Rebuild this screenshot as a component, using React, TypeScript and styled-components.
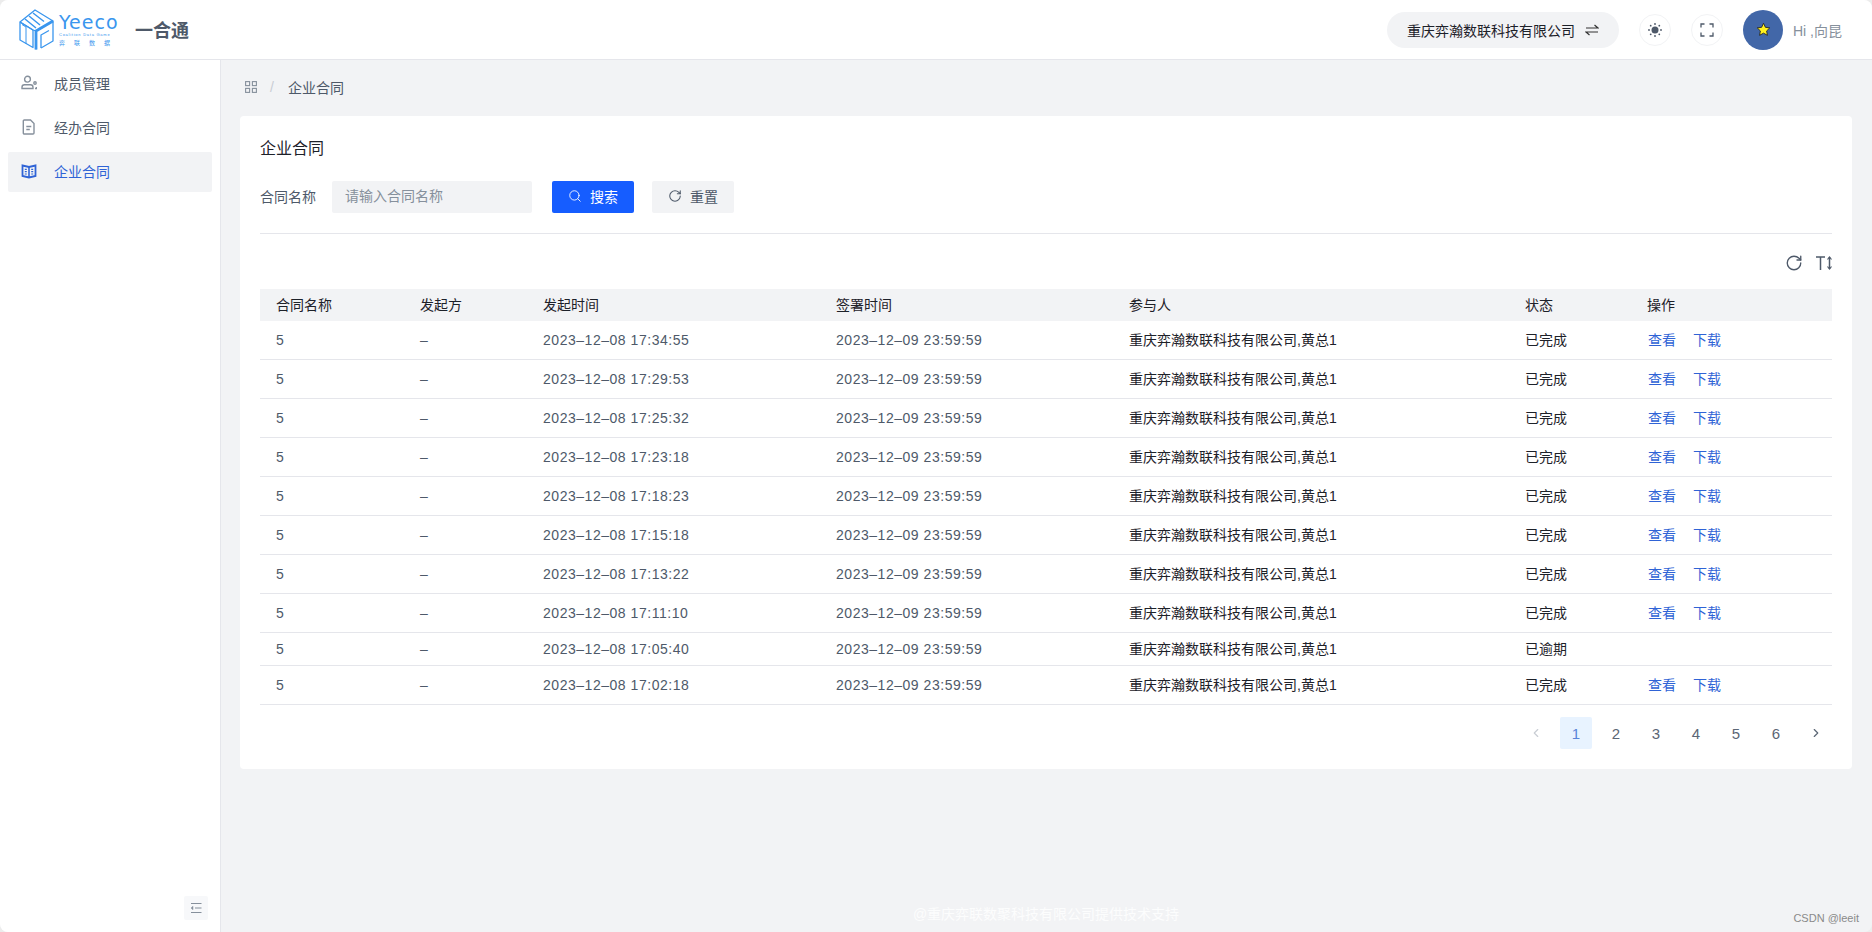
import React from "react";
import styled, { createGlobalStyle } from "styled-components";
import { ChevronLeft, ChevronRight, RotateCw, Search } from "lucide-react";

const GlobalStyle = createGlobalStyle`
  html, body {
    margin: 0;
    padding: 0;
    background: #ececec;
  }
  body {
    font-family: "Liberation Sans", "Noto Sans CJK SC", sans-serif;
    font-size: 14px;
    color: #1d2129;
  }
`;

const Page = styled.div`
  width: 1872px;
  height: 932px;
  display: flex;
  flex-direction: column;
  overflow: hidden;
  position: relative;
  background: #f2f3f5;
  border-radius: 8px;
`;

const Header = styled.header`
  height: 60px;
  flex: none;
  box-sizing: border-box;
  display: flex;
  align-items: center;
  background: #fff;
  border-bottom: 1px solid #e5e6eb;
  padding: 0 30px 0 19px;
`;

const LogoWrap = styled.div`
  display: flex;
  align-items: center;
  gap: 4px;
`;

const LogoText = styled.div`
  width: 60px;
  display: flex;
  flex-direction: column;
  align-items: flex-start;
  color: #3a96ee;
  line-height: 1;
`;

const LogoName = styled.span`
  font-family: "DejaVu Sans", sans-serif;
  font-size: 19px;
  letter-spacing: 1px;
`;

const LogoSub = styled.span`
  font-size: 4px;
  letter-spacing: 0.75px;
  white-space: nowrap;
  margin-top: 1px;
`;

const LogoCn = styled.span`
  font-size: 6px;
  letter-spacing: 9px;
  margin-top: 3px;
  white-space: nowrap;
`;

const AppName = styled.div`
  margin-left: 16px;
  padding-bottom: 2px;
  font-size: 18px;
  font-weight: 700;
  color: #4e5969;
`;

const HeaderRight = styled.div`
  margin-left: auto;
  display: flex;
  align-items: center;
`;

const OrgSwitch = styled.div`
  height: 36px;
  width: 232px;
  box-sizing: border-box;
  padding: 0 20px;
  border-radius: 18px;
  background: #f2f3f5;
  display: flex;
  align-items: center;
  justify-content: space-between;
  margin-right: 20px;
`;

const RoundBtn = styled.div`
  width: 32px;
  height: 32px;
  box-sizing: border-box;
  border: 1px solid #f2f3f5;
  border-radius: 50%;
  display: flex;
  align-items: center;
  justify-content: center;
  margin-right: 20px;
`;

const Avatar = styled.div`
  width: 40px;
  height: 40px;
  border-radius: 50%;
  background: #4267a8;
  display: flex;
  align-items: center;
  justify-content: center;
`;

const Hi = styled.span`
  margin-left: 10px;
  color: #86909c;
`;

const Body = styled.div`
  flex: 1;
  display: flex;
  min-height: 0;
`;

const Side = styled.aside`
  width: 221px;
  flex: none;
  box-sizing: border-box;
  background: #fff;
  border-right: 1px solid #e5e6eb;
  padding: 4px 8px 12px;
  display: flex;
  flex-direction: column;
  gap: 4px;
`;

const MenuItem = styled.div<{ $active?: boolean }>`
  height: 40px;
  box-sizing: border-box;
  flex: none;
  display: flex;
  align-items: center;
  gap: 17px;
  padding: 0 0 2px 13px;
  border-radius: 2px;
  background: ${(p) => (p.$active ? "#f2f3f5" : "transparent")};
  color: ${(p) => (p.$active ? "#2f63d6" : "#4e5969")};
`;

const Collapse = styled.div`
  margin-top: auto;
  margin-left: auto;
  margin-right: 4px;
  width: 24px;
  height: 24px;
  border-radius: 2px;
  background: #f7f8fa;
  display: flex;
  align-items: center;
  justify-content: center;
`;

const Main = styled.main`
  flex: 1;
  min-width: 0;
  display: flex;
  flex-direction: column;
  padding: 0 20px 0 19px;
`;

const Crumbs = styled.nav`
  height: 56px;
  box-sizing: border-box;
  flex: none;
  display: flex;
  align-items: center;
  padding: 0 0 2px 5px;
  color: #4e5969;
`;

const Slash = styled.span`
  color: #c9cdd4;
  margin: 0 14px 0 13px;
`;

const Card = styled.section`
  background: #fff;
  border-radius: 4px;
  padding: 20px;
`;

const CardTitle = styled.h2`
  margin: 0;
  font-size: 16px;
  font-weight: 400;
  line-height: 26px;
`;

const FilterBar = styled.div`
  margin-top: 19px;
  padding-bottom: 20px;
  border-bottom: 1px solid #e5e6eb;
  display: flex;
  align-items: center;
`;

const FieldLabel = styled.label`
  color: #4e5969;
  margin: 0 16px 2px 0;
`;

const TextInput = styled.input`
  width: 200px;
  height: 32px;
  box-sizing: border-box;
  border: 0;
  outline: 0;
  padding: 0 13px 2px;
  border-radius: 2px;
  background: #f2f3f5;
  font: inherit;
  &::placeholder {
    color: #86909c;
  }
`;

const Btn = styled.button<{ $primary?: boolean }>`
  height: 32px;
  width: 82px;
  border: 0;
  border-radius: 2px;
  padding: 0 0 2px;
  display: flex;
  align-items: center;
  justify-content: center;
  gap: 8px;
  font: inherit;
  margin-left: ${(p) => (p.$primary ? "20px" : "18px")};
  background: ${(p) => (p.$primary ? "#165dff" : "#f2f3f5")};
  color: ${(p) => (p.$primary ? "#fff" : "#4e5969")};
`;

const Tools = styled.div`
  height: 55px;
  display: flex;
  align-items: center;
  justify-content: flex-end;
  gap: 13px;
  padding-top: 2px;
  box-sizing: border-box;
`;

const Table = styled.table`
  width: 100%;
  table-layout: fixed;
  border-collapse: separate;
  border-spacing: 0;
`;

const Th = styled.th`
  background: #f2f3f5;
  font-weight: 400;
  text-align: left;
  line-height: 22px;
  padding: 5px 16px;
`;

const Td = styled.td<{ $muted?: boolean }>`
  line-height: 22px;
  padding: 5px 16px;
  border-bottom: 1px solid #e5e6eb;
  white-space: nowrap;
  color: ${(p) => (p.$muted ? "#4e5969" : "#1d2129")};
`;

const DateText = styled.span`
  letter-spacing: 0.53px;
`;

const Action = styled.a`
  display: inline-block;
  padding: 3px 0;
  margin: 0 16px 0 1px;
  color: #2f63d6;
`;

const Pager = styled.div`
  margin-top: 12px;
  display: flex;
  justify-content: flex-end;
  gap: 8px;
`;

const PageItem = styled.div<{ $active?: boolean; $disabled?: boolean }>`
  width: 32px;
  height: 32px;
  border-radius: 2px;
  display: flex;
  align-items: center;
  justify-content: center;
  background: ${(p) => (p.$active ? "#e8f3ff" : "transparent")};
  color: ${(p) => (p.$active ? "#5a84d8" : p.$disabled ? "#c9cdd4" : "#5b6675")};
  font-size: 15px;
`;

const Footer = styled.footer`
  margin-top: auto;
  height: 38px;
  display: flex;
  align-items: center;
  justify-content: center;
  color: rgba(255, 255, 255, 0.85);
`;

const Watermark = styled.div`
  position: absolute;
  right: 13px;
  bottom: 8px;
  font-size: 11px;
  color: #8a8a8a;
`;

const Logo = () => (
  <svg width="36" height="42" viewBox="0 0 36 42" fill="none" stroke="#3a96ee" strokeWidth="1.300" strokeLinejoin="round">
    <path d="M1 13v18l13 7.500V21z" />
    <path d="M3 15.500 7 18v17" strokeWidth="1" />
    <path d="M17 40.500V22L34 12v20l-12 7" />
    <path d="M17 40.500V22L34 12" strokeWidth="2.800" />
    <path d="M22 39V26l8-4.500" />
    <path d="M1 13 16 1l18 11" />
    <path d="M6 10 17 19M10 7l11 9M14 4l11 8.500" strokeWidth="1.500" />
    <path d="M1 13l13 8 3 1" />
  </svg>
);

const SwapIcon = () => (
  <svg width="14" height="12" viewBox="0 0 14 12" fill="none" stroke="#333" strokeWidth="1.200">
    <path d="M1 4h12L9.500 1M13 8H1l3.500 3" />
  </svg>
);

const SunIcon = () => (
  <svg width="14" height="14" viewBox="0 0 14 14" fill="#4e5969">
    <circle cx="7" cy="7" r="3.500" />
    <circle cx="7" cy="1" r="0.900" />
    <circle cx="7" cy="13" r="0.900" />
    <circle cx="1" cy="7" r="0.900" />
    <circle cx="13" cy="7" r="0.900" />
    <circle cx="2.700" cy="2.700" r="0.900" />
    <circle cx="11.300" cy="2.700" r="0.900" />
    <circle cx="2.700" cy="11.300" r="0.900" />
    <circle cx="11.300" cy="11.300" r="0.900" />
  </svg>
);

const FullIcon = () => (
  <svg width="14" height="14" viewBox="0 0 14 14" fill="none" stroke="#4e5969" strokeWidth="1.300">
    <path d="M1 4.500V1h3.500M9.500 1H13v3.500M13 9.500V13H9.500M4.500 13H1V9.500" />
  </svg>
);

const StarIcon = () => (
  <svg width="15" height="15" viewBox="0 0 24 24" fill="#fff21f" stroke="#222" strokeWidth="1.400" strokeLinejoin="round">
    <path d="m12 2 3 6.500 7 .9-5 4.900 1.300 7L12 17.800 5.700 21.300l1.300-7-5-4.900 7-.9z" />
  </svg>
);

const PeopleIcon = () => (
  <svg width="16" height="16" viewBox="0 0 16 16" fill="none" stroke="#86909c" strokeWidth="1.400">
    <circle cx="6.500" cy="4.200" r="2.900" />
    <path d="M1 13.500v-1.300a2.500 2.500 0 0 1 2.500-2.500h6a2.500 2.500 0 0 1 2.500 2.500v1.300z" />
    <circle cx="14" cy="8" r="1.200" />
    <path d="M14 13.500h1.500V12" />
  </svg>
);

const DocIcon = () => (
  <svg width="16" height="16" viewBox="0 0 16 16" fill="none" stroke="#86909c" strokeWidth="1.400">
    <path d="M3.300 1h6.200L13 4.500V14a1 1 0 0 1-1 1H3.300a1 1 0 0 1-1-1V2a1 1 0 0 1 1-1z" />
    <path d="M5.300 7.500h5M5.300 10.500h3.500" />
  </svg>
);

const BookIcon = () => (
  <svg width="16" height="16" viewBox="0 0 16 16" fill="none" stroke="#2f63d6" strokeWidth="1.800">
    <path d="M1.500 2.500 8 4l6.500-1.500V13L8 14.500 1.500 13z" />
    <path d="M8 4v10.500" strokeWidth="1.600" />
    <path d="M3.800 6.300h2M3.800 8.700h2M3.800 11h2M10.200 6.300h2M10.200 8.700h2M10.200 11h2" strokeWidth="1.200" />
  </svg>
);

const GridIcon = () => (
  <svg width="12" height="12" viewBox="0 0 12 12" fill="none" stroke="#86909c" strokeWidth="1.100">
    <rect x="0.600" y="0.600" width="4" height="4" />
    <rect x="7.400" y="0.600" width="4" height="4" />
    <rect x="0.600" y="7.400" width="4" height="4" />
    <rect x="7.400" y="7.400" width="4" height="4" />
  </svg>
);

const CollapseIcon = () => (
  <svg width="12" height="12" viewBox="0 0 12 12" fill="#86909c" stroke="#86909c" strokeWidth="1.100">
    <path d="M1 1.500h10.500M5 6h6.500M1 10.500h10.500" fill="none" />
    <path d="M3 4.300v3.400L1 6z" strokeWidth="0.500" />
  </svg>
);

const LineHeightIcon = () => (
  <svg width="16" height="14" viewBox="0 0 16 14" fill="none" stroke="#4e5969" strokeWidth="1.500">
    <path d="M0 1h9M4.500 1v13" />
    <path d="M13.500 1v12" />
    <path d="M11.500 3.500 13.500 1l2 2.500M11.500 10.500l2 2.500 2-2.500" strokeWidth="1.200" />
  </svg>
);

interface ContractRow {
  started: string;
  status: string;
  compact?: boolean;
}

const rows: ContractRow[] = [
  { started: "2023–12–08 17:34:55", status: "已完成" },
  { started: "2023–12–08 17:29:53", status: "已完成" },
  { started: "2023–12–08 17:25:32", status: "已完成" },
  { started: "2023–12–08 17:23:18", status: "已完成" },
  { started: "2023–12–08 17:18:23", status: "已完成" },
  { started: "2023–12–08 17:15:18", status: "已完成" },
  { started: "2023–12–08 17:13:22", status: "已完成" },
  { started: "2023–12–08 17:11:10", status: "已完成" },
  { started: "2023–12–08 17:05:40", status: "已逾期", compact: true },
  { started: "2023–12–08 17:02:18", status: "已完成" },
];

const columns = [
  { title: "合同名称", width: 144 },
  { title: "发起方", width: 123 },
  { title: "发起时间", width: 293 },
  { title: "签署时间", width: 293 },
  { title: "参与人", width: 396 },
  { title: "状态", width: 122 },
  { title: "操作", width: 201 },
];

const App: React.FC = () => (
  <Page>
    <GlobalStyle />
    <Header>
      <LogoWrap>
        <Logo />
        <LogoText>
          <LogoName>Yeeco</LogoName>
          <LogoSub>Coalition Data Game</LogoSub>
          <LogoCn>弈联数据</LogoCn>
        </LogoText>
      </LogoWrap>
      <AppName>一合通</AppName>
      <HeaderRight>
        <OrgSwitch>
          重庆弈瀚数联科技有限公司
          <SwapIcon />
        </OrgSwitch>
        <RoundBtn>
          <SunIcon />
        </RoundBtn>
        <RoundBtn>
          <FullIcon />
        </RoundBtn>
        <Avatar>
          <StarIcon />
        </Avatar>
        <Hi>Hi ,向昆</Hi>
      </HeaderRight>
    </Header>
    <Body>
      <Side>
        <MenuItem>
          <PeopleIcon />
          成员管理
        </MenuItem>
        <MenuItem>
          <DocIcon />
          经办合同
        </MenuItem>
        <MenuItem $active>
          <BookIcon />
          企业合同
        </MenuItem>
        <Collapse>
          <CollapseIcon />
        </Collapse>
      </Side>
      <Main>
        <Crumbs>
          <GridIcon />
          <Slash>/</Slash>
          企业合同
        </Crumbs>
        <Card>
          <CardTitle>企业合同</CardTitle>
          <FilterBar>
            <FieldLabel>合同名称</FieldLabel>
            <TextInput placeholder="请输入合同名称" />
            <Btn $primary>
              <Search size={14} strokeWidth={1.5} />
              搜索
            </Btn>
            <Btn>
              <RotateCw size={14} strokeWidth={1.8} />
              重置
            </Btn>
          </FilterBar>
          <Tools>
            <RotateCw size={18} color="#4e5969" strokeWidth={1.8} />
            <LineHeightIcon />
          </Tools>
          <Table>
            <colgroup>
              {columns.map((c) => (
                <col key={c.title} style={{ width: c.width }} />
              ))}
            </colgroup>
            <thead>
              <tr>
                {columns.map((c) => (
                  <Th key={c.title}>{c.title}</Th>
                ))}
              </tr>
            </thead>
            <tbody>
              {rows.map((r) => (
                <tr key={r.started}>
                  <Td $muted>5</Td>
                  <Td $muted>–</Td>
                  <Td $muted>
                    <DateText>{r.started}</DateText>
                  </Td>
                  <Td $muted>
                    <DateText>2023–12–09 23:59:59</DateText>
                  </Td>
                  <Td>重庆弈瀚数联科技有限公司,黄总1</Td>
                  <Td>{r.status}</Td>
                  <Td>
                    {!r.compact && (
                      <>
                        <Action>查看</Action>
                        <Action>下载</Action>
                      </>
                    )}
                  </Td>
                </tr>
              ))}
            </tbody>
          </Table>
          <Pager>
            <PageItem $disabled>
              <ChevronLeft size={14} />
            </PageItem>
            <PageItem $active>1</PageItem>
            <PageItem>2</PageItem>
            <PageItem>3</PageItem>
            <PageItem>4</PageItem>
            <PageItem>5</PageItem>
            <PageItem>6</PageItem>
            <PageItem>
              <ChevronRight size={14} />
            </PageItem>
          </Pager>
        </Card>
        <Footer>@重庆弈联数聚科技有限公司提供技术支持</Footer>
      </Main>
    </Body>
    <Watermark>CSDN @leeit</Watermark>
  </Page>
);

export default App;
